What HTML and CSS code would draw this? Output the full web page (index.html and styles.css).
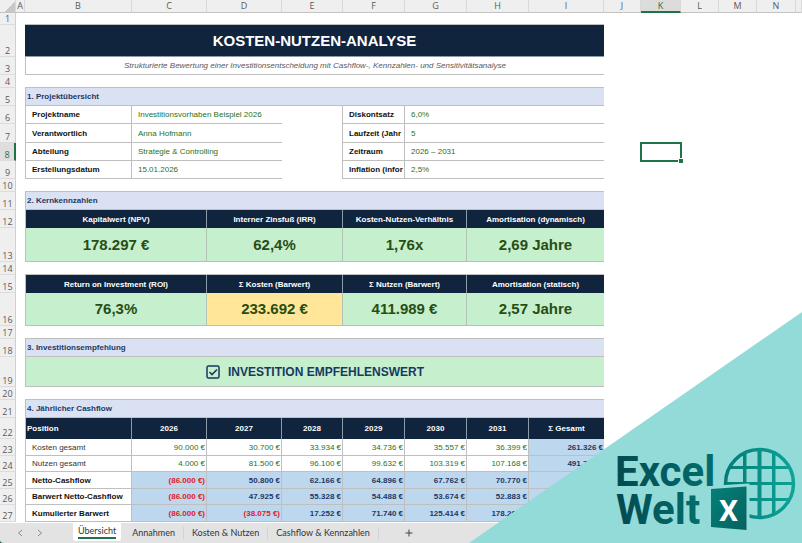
FILE: index.html
```html
<!DOCTYPE html>
<html lang="de">
<head>
	<meta charset="UTF-8">
	<title>Kosten-Nutzen-Analyse</title>
	<link rel="stylesheet" href="styles.css">
</head>
<body>
	<main class="sheet">
		<table class="grid">
			<colgroup>
				<col class="c-num"><col class="c-a"><col class="c-b"><col class="c-c"><col class="c-c"><col class="c-e"><col class="c-f"><col class="c-f"><col class="c-f"><col class="c-c"><col class="c-j"><col class="c-k"><col class="c-l"><col class="c-l"><col class="c-n"><col>
			</colgroup>
			<thead>
				<tr class="letters">
					<th class="corner"></th><th>A</th><th>B</th><th>C</th><th>D</th><th>E</th><th>F</th><th>G</th><th>H</th><th>I</th><th>J</th><th class="on">K</th><th>L</th><th>M</th><th>N</th><th></th>
				</tr>
			</thead>
			<tbody>
				<tr class="h12"><th>1</th><td></td><td class="line" colspan="8"></td><td colspan="6"></td></tr>
				<tr class="h32"><th>2</th><td></td><td class="title" colspan="8">KOSTEN-NUTZEN-ANALYSE</td><td colspan="6"></td></tr>
				<tr class="h18"><th>3</th><td></td><td class="subtitle" colspan="8">Strukturierte Bewertung einer Investitionsentscheidung mit Cashflow-, Kennzahlen- und Sensitivitätsanalyse</td><td colspan="6"></td></tr>
				<tr class="h13"><th>4</th><td></td><td class="line" colspan="8"></td><td colspan="6"></td></tr>

				<!-- 1. Projektübersicht -->
				<tr class="h18"><th>5</th><td></td><td class="section" colspan="8">1. Projektübersicht</td><td colspan="6"></td></tr>
				<tr class="h18"><th>6</th><td></td><td class="label first">Projektname</td><td class="value" colspan="2">Investitionsvorhaben Beispiel 2026</td><td class="gap"></td><td class="label">Diskontsatz</td><td class="value" colspan="3">6,0%</td><td colspan="6"></td></tr>
				<tr class="h19"><th>7</th><td></td><td class="label first">Verantwortlich</td><td class="value" colspan="2">Anna Hofmann</td><td class="gap"></td><td class="label">Laufzeit (Jahr</td><td class="value" colspan="3">5</td><td colspan="6"></td></tr>
				<tr class="h18"><th class="on">8</th><td></td><td class="label first">Abteilung</td><td class="value" colspan="2">Strategie &amp; Controlling</td><td class="gap"></td><td class="label">Zeitraum</td><td class="value" colspan="3">2026 – 2031</td><td></td><td class="selected"></td><td colspan="4"></td></tr>
				<tr class="h18"><th>9</th><td></td><td class="label first">Erstellungsdatum</td><td class="value" colspan="2">15.01.2026</td><td class="gap"></td><td class="label">Inflation (infor</td><td class="value" colspan="3">2,5%</td><td colspan="6"></td></tr>
				<tr class="h13"><th>10</th><td></td><td class="line" colspan="8"></td><td colspan="6"></td></tr>

				<!-- 2. Kernkennzahlen -->
				<tr class="h18"><th>11</th><td></td><td class="section" colspan="8">2. Kernkennzahlen</td><td colspan="6"></td></tr>
				<tr class="h18 head"><th>12</th><td></td><td class="dark first" colspan="2">Kapitalwert (NPV)</td><td class="dark" colspan="2">Interner Zinsfuß (IRR)</td><td class="dark" colspan="2">Kosten-Nutzen-Verhältnis</td><td class="dark last" colspan="2">Amortisation (dynamisch)</td><td colspan="6"></td></tr>
				<tr class="h34"><th>13</th><td></td><td class="kpi first" colspan="2">178.297 €</td><td class="kpi" colspan="2">62,4%</td><td class="kpi" colspan="2">1,76x</td><td class="kpi last" colspan="2">2,69 Jahre</td><td colspan="6"></td></tr>
				<tr class="h13"><th>14</th><td></td><td class="line" colspan="8"></td><td colspan="6"></td></tr>
				<tr class="h18 head"><th>15</th><td></td><td class="dark first" colspan="2">Return on Investment (ROI)</td><td class="dark" colspan="2">Σ Kosten (Barwert)</td><td class="dark" colspan="2">Σ Nutzen (Barwert)</td><td class="dark last" colspan="2">Amortisation (statisch)</td><td colspan="6"></td></tr>
				<tr class="h33"><th>16</th><td></td><td class="kpi first" colspan="2">76,3%</td><td class="kpi yellow" colspan="2">233.692 €</td><td class="kpi" colspan="2">411.989 €</td><td class="kpi last" colspan="2">2,57 Jahre</td><td colspan="6"></td></tr>
				<tr class="h13"><th>17</th><td></td><td class="line" colspan="8"></td><td colspan="6"></td></tr>

				<!-- 3. Investitionsempfehlung -->
				<tr class="h18"><th>18</th><td></td><td class="section" colspan="8">3. Investitionsempfehlung</td><td colspan="6"></td></tr>
				<tr class="h30"><th>19</th><td></td><td class="advice" colspan="8"><div><svg width="14" height="14" viewBox="0 0 14 14" fill="none" stroke="#173a5e"><rect x="1" y="1" width="12" height="12" rx="1.5" stroke-width="1.5"/><path d="M3.5 7 L6 9.5 L11 4.5" stroke-width="1.6"/></svg>INVESTITION EMPFEHLENSWERT</div></td><td colspan="6"></td></tr>
				<tr class="h13"><th>20</th><td></td><td class="line" colspan="8"></td><td colspan="6"></td></tr>

				<!-- 4. Jährlicher Cashflow -->
				<tr class="h18"><th>21</th><td></td><td class="section" colspan="8">4. Jährlicher Cashflow</td><td colspan="6"></td></tr>
				<tr class="h21 head"><th>22</th><td></td><td class="dark first left">Position</td><td class="dark">2026</td><td class="dark">2027</td><td class="dark">2028</td><td class="dark">2029</td><td class="dark">2030</td><td class="dark">2031</td><td class="dark last">Σ Gesamt</td><td colspan="6"></td></tr>
				<tr class="h17"><th>23</th><td></td><td class="label first plain">Kosten gesamt</td><td class="num">90.000 €</td><td class="num">30.700 €</td><td class="num">33.934 €</td><td class="num">34.736 €</td><td class="num">35.557 €</td><td class="num">36.399 €</td><td class="num blue last">261.326 €</td><td colspan="6"></td></tr>
				<tr class="h16"><th>24</th><td></td><td class="label first plain">Nutzen gesamt</td><td class="num">4.000 €</td><td class="num">81.500 €</td><td class="num">96.100 €</td><td class="num">99.632 €</td><td class="num">103.319 €</td><td class="num">107.168 €</td><td class="num blue last">491.719 €</td><td colspan="6"></td></tr>
				<tr class="h17"><th>25</th><td></td><td class="label first">Netto-Cashflow</td><td class="num blue neg">(86.000 €)</td><td class="num blue">50.800 €</td><td class="num blue">62.166 €</td><td class="num blue">64.896 €</td><td class="num blue">67.762 €</td><td class="num blue">70.770 €</td><td class="num blue last"></td><td colspan="6"></td></tr>
				<tr class="h16"><th>26</th><td></td><td class="label first">Barwert Netto-Cashflow</td><td class="num blue neg">(86.000 €)</td><td class="num blue">47.925 €</td><td class="num blue">55.328 €</td><td class="num blue">54.488 €</td><td class="num blue">53.674 €</td><td class="num blue">52.883 €</td><td class="num blue last"></td><td colspan="6"></td></tr>
				<tr class="h17"><th>27</th><td></td><td class="label first">Kumulierter Barwert</td><td class="num blue neg">(86.000 €)</td><td class="num blue neg">(38.075 €)</td><td class="num blue">17.252 €</td><td class="num blue">71.740 €</td><td class="num blue">125.414 €</td><td class="num blue">178.297 €</td><td class="num blue last"></td><td colspan="6"></td></tr>
			</tbody>
		</table>
	</main>

	<nav class="tabs">
		<button class="arrow" aria-label="Zurück"><svg width="6" height="8" viewBox="0 0 6 8"><path d="M5 1 L1.5 4 L5 7"/></svg></button>
		<button class="arrow" aria-label="Weiter"><svg width="6" height="8" viewBox="0 0 6 8"><path d="M1 1 L4.5 4 L1 7"/></svg></button>
		<button class="tab active"><span>Übersicht</span></button>
		<button class="tab">Annahmen</button>
		<button class="tab">Kosten &amp; Nutzen</button>
		<button class="tab">Cashflow &amp; Kennzahlen</button>
		<button class="add" aria-label="Neues Blatt"><svg width="8" height="8" viewBox="0 0 8 8"><path d="M4 0.5 V7.5 M0.5 4 H7.5"/></svg></button>
	</nav>

	<div class="brand">
		<svg width="192" height="103" viewBox="0 0 192 103">
			<defs>
				<linearGradient id="word" x1="0" x2="1"><stop offset="0" stop-color="#024a50"/><stop offset="1" stop-color="#036e6d"/></linearGradient>
				<linearGradient id="globe" gradientUnits="userSpaceOnUse" x1="114" y1="0" x2="185" y2="0"><stop offset="0" stop-color="#047a75"/><stop offset="1" stop-color="#0ca598"/></linearGradient>
				<linearGradient id="box" x1="0" x2="1" y2="1"><stop offset="0" stop-color="#058079"/><stop offset="1" stop-color="#04625f"/></linearGradient>
				<clipPath id="disc"><circle cx="149.500" cy="43.500" r="34"/></clipPath>
			</defs>
			<circle cx="149.500" cy="43.500" r="34" fill="none" stroke="url(#globe)" stroke-width="3.500"/>
			<g clip-path="url(#disc)" fill="url(#globe)">
				<rect x="133" y="8" width="3.500" height="72"/>
				<rect x="147.500" y="8" width="4" height="72"/>
				<rect x="162" y="8" width="3.500" height="72"/>
				<rect x="114" y="26" width="72" height="3"/>
				<rect x="114" y="42" width="72" height="3"/>
				<rect x="114" y="58" width="72" height="3"/>
			</g>
			<path d="M98 46 L139.500 43.500 V94 L98 90 Z" fill="#93dbd8"/>
			<path d="M101 49 L136.500 46.500 V90 L101 87 Z" fill="url(#box)"/>
			<text class="mark" x="118.500" y="81" text-anchor="middle">X</text>
			<text class="word" x="5" y="46" fill="url(#word)">Excel</text>
			<text class="word" x="6" y="84" fill="url(#word)">Welt</text>
		</svg>
	</div>
</body>
</html>
```

FILE: styles.css
```css
*{margin:0;padding:0;box-sizing:border-box;}
body{display:flex;flex-direction:column;height:100vh;overflow:hidden;position:relative;background:#0b4a3c;font-family:"Liberation Sans",Arial,sans-serif;font-size:8px;line-height:11px;color:#111;}
.sheet{flex:1;min-height:0;overflow:hidden;background:#fff;}

/* grid */
.grid{width:100%;table-layout:fixed;border-collapse:separate;border-spacing:0;}
.c-num{width:16px;}
.c-a{width:9px;}
.c-b{width:107px;}
.c-c{width:75px;}
.c-e{width:61px;}
.c-f{width:62px;}
.c-j{width:37px;}
.c-k{width:40px;}
.c-l{width:38px;}
.c-n{width:39px;}
.h12{height:12px;}
.h13{height:13px;}
.h16{height:16px;}
.h17{height:17px;}
.h18{height:18px;}
.h19{height:19px;}
.h21{height:21px;}
.h30{height:30px;}
.h32{height:32px;}
.h33{height:33px;}
.h34{height:34px;}
td{overflow:hidden;white-space:nowrap;vertical-align:middle;}

/* column letters and row numbers */
th{background:#efefef;color:#5a5a5a;font-family:"Open Sans","Noto Sans",sans-serif;font-size:9px;font-weight:400;line-height:10px;text-align:center;}
.letters{height:13px;}
.letters th{border-right:1px solid #d9d9d9;border-bottom:1px solid #c3c3c3;}
.letters th.corner{background:linear-gradient(135deg,#efefef 60%,#c8c8c8 60%);}
.letters th.on{background:#dcdcdc;color:#217346;border-bottom:2px solid #217346;}
tbody th{vertical-align:bottom;border-right:1px solid #cfcfcf;border-bottom:1px solid #dcdcdc;}
tbody th.on{background:#dedede;color:#217346;border-right:2px solid #217346;}

/* cells */
.line{border-bottom:1px solid #bfbfbf;}
.title{background:#10243e;color:#fff;font-size:15px;font-weight:700;line-height:18px;text-align:center;border-bottom:1px solid #8d9aaa;}
.subtitle{color:#595959;font-style:italic;text-align:center;border-left:1px solid #bfbfbf;border-bottom:1px solid #bfbfbf;}
.section{background:#d9e1f2;color:#1f3864;font-weight:700;padding-left:1px;border-left:1px solid #bfbfbf;border-bottom:1px solid #bfbfbf;}
.label{font-weight:700;padding-left:6px;border-right:1px solid #bfbfbf;border-bottom:1px solid #bfbfbf;}
.gap{border-right:1px solid #bfbfbf;}
.first{border-left:1px solid #bfbfbf;}
.plain{font-weight:400;color:#333;}
.value{color:#267326;padding-left:6px;border-bottom:1px solid #bfbfbf;}
.dark{background:#10243e;color:#fff;font-weight:700;text-align:center;border-right:1px solid #8d9aaa;}
.dark.left{text-align:left;padding-left:1px;}
.kpi{background:#c6efce;color:#274e13;font-size:15px;font-weight:700;line-height:18px;text-align:center;border-right:1px solid #b3c3b6;border-bottom:1px solid #b3c3b6;}
.yellow{background:#ffe699;}
.advice{background:#c6efce;color:#173a5e;font-size:12px;font-weight:700;line-height:14px;border-left:1px solid #bfbfbf;border-bottom:1px solid #bfbfbf;}
.advice div{display:flex;align-items:center;justify-content:center;gap:8px;}
.num{color:#267326;text-align:right;padding-right:1px;border-right:1px solid #bfbfbf;border-bottom:1px solid #bfbfbf;}
.blue{background:#bdd7ee;color:#1f3864;font-weight:700;}
.neg{color:#e01b24;}
.last{border-right:0;}
.selected{position:relative;overflow:visible;outline:2px solid #217346;outline-offset:-1px;}
.selected::after{content:"";position:absolute;right:-2px;bottom:-2px;width:4px;height:4px;background:#217346;outline:1px solid #fff;}

/* sheet tabs */
.tabs{display:flex;align-items:center;height:20px;padding-left:16px;background:#e3e3e3;border-bottom-left-radius:3px;}
.tabs button{border:0;background:none;color:#333;font-family:Lato,"Open Sans",sans-serif;font-size:9px;line-height:12px;}
.tabs svg{display:block;fill:none;stroke:#8a8a8a;stroke-width:1;}
.tabs .arrow{padding:0 8px 0 1px;margin-right:5px;}
.tabs .arrow + .tab{margin-left:17px;}
.tabs .tab{padding:0 8px;border-right:1px solid #d2d2d2;}
.tabs .active{align-self:flex-start;height:18px;padding:0 5px;margin-right:3px;background:#fff;border-right:0;border-radius:0 0 3px 3px;}
.active span{display:block;border-bottom:2px solid #217346;}
.tabs .add{padding:0 26px;}
.tabs .add svg{stroke:#444;}

/* logo corner */
.brand{position:absolute;right:0;bottom:0;width:333px;height:231px;display:flex;justify-content:flex-end;align-items:flex-end;background:#93dbd8;clip-path:polygon(100% 0,100% 100%,0 100%);}
.word{font-family:Roboto,sans-serif;font-size:42px;font-weight:700;}
.mark{font-family:Roboto,sans-serif;font-size:30px;font-weight:700;fill:#fff;}
```
